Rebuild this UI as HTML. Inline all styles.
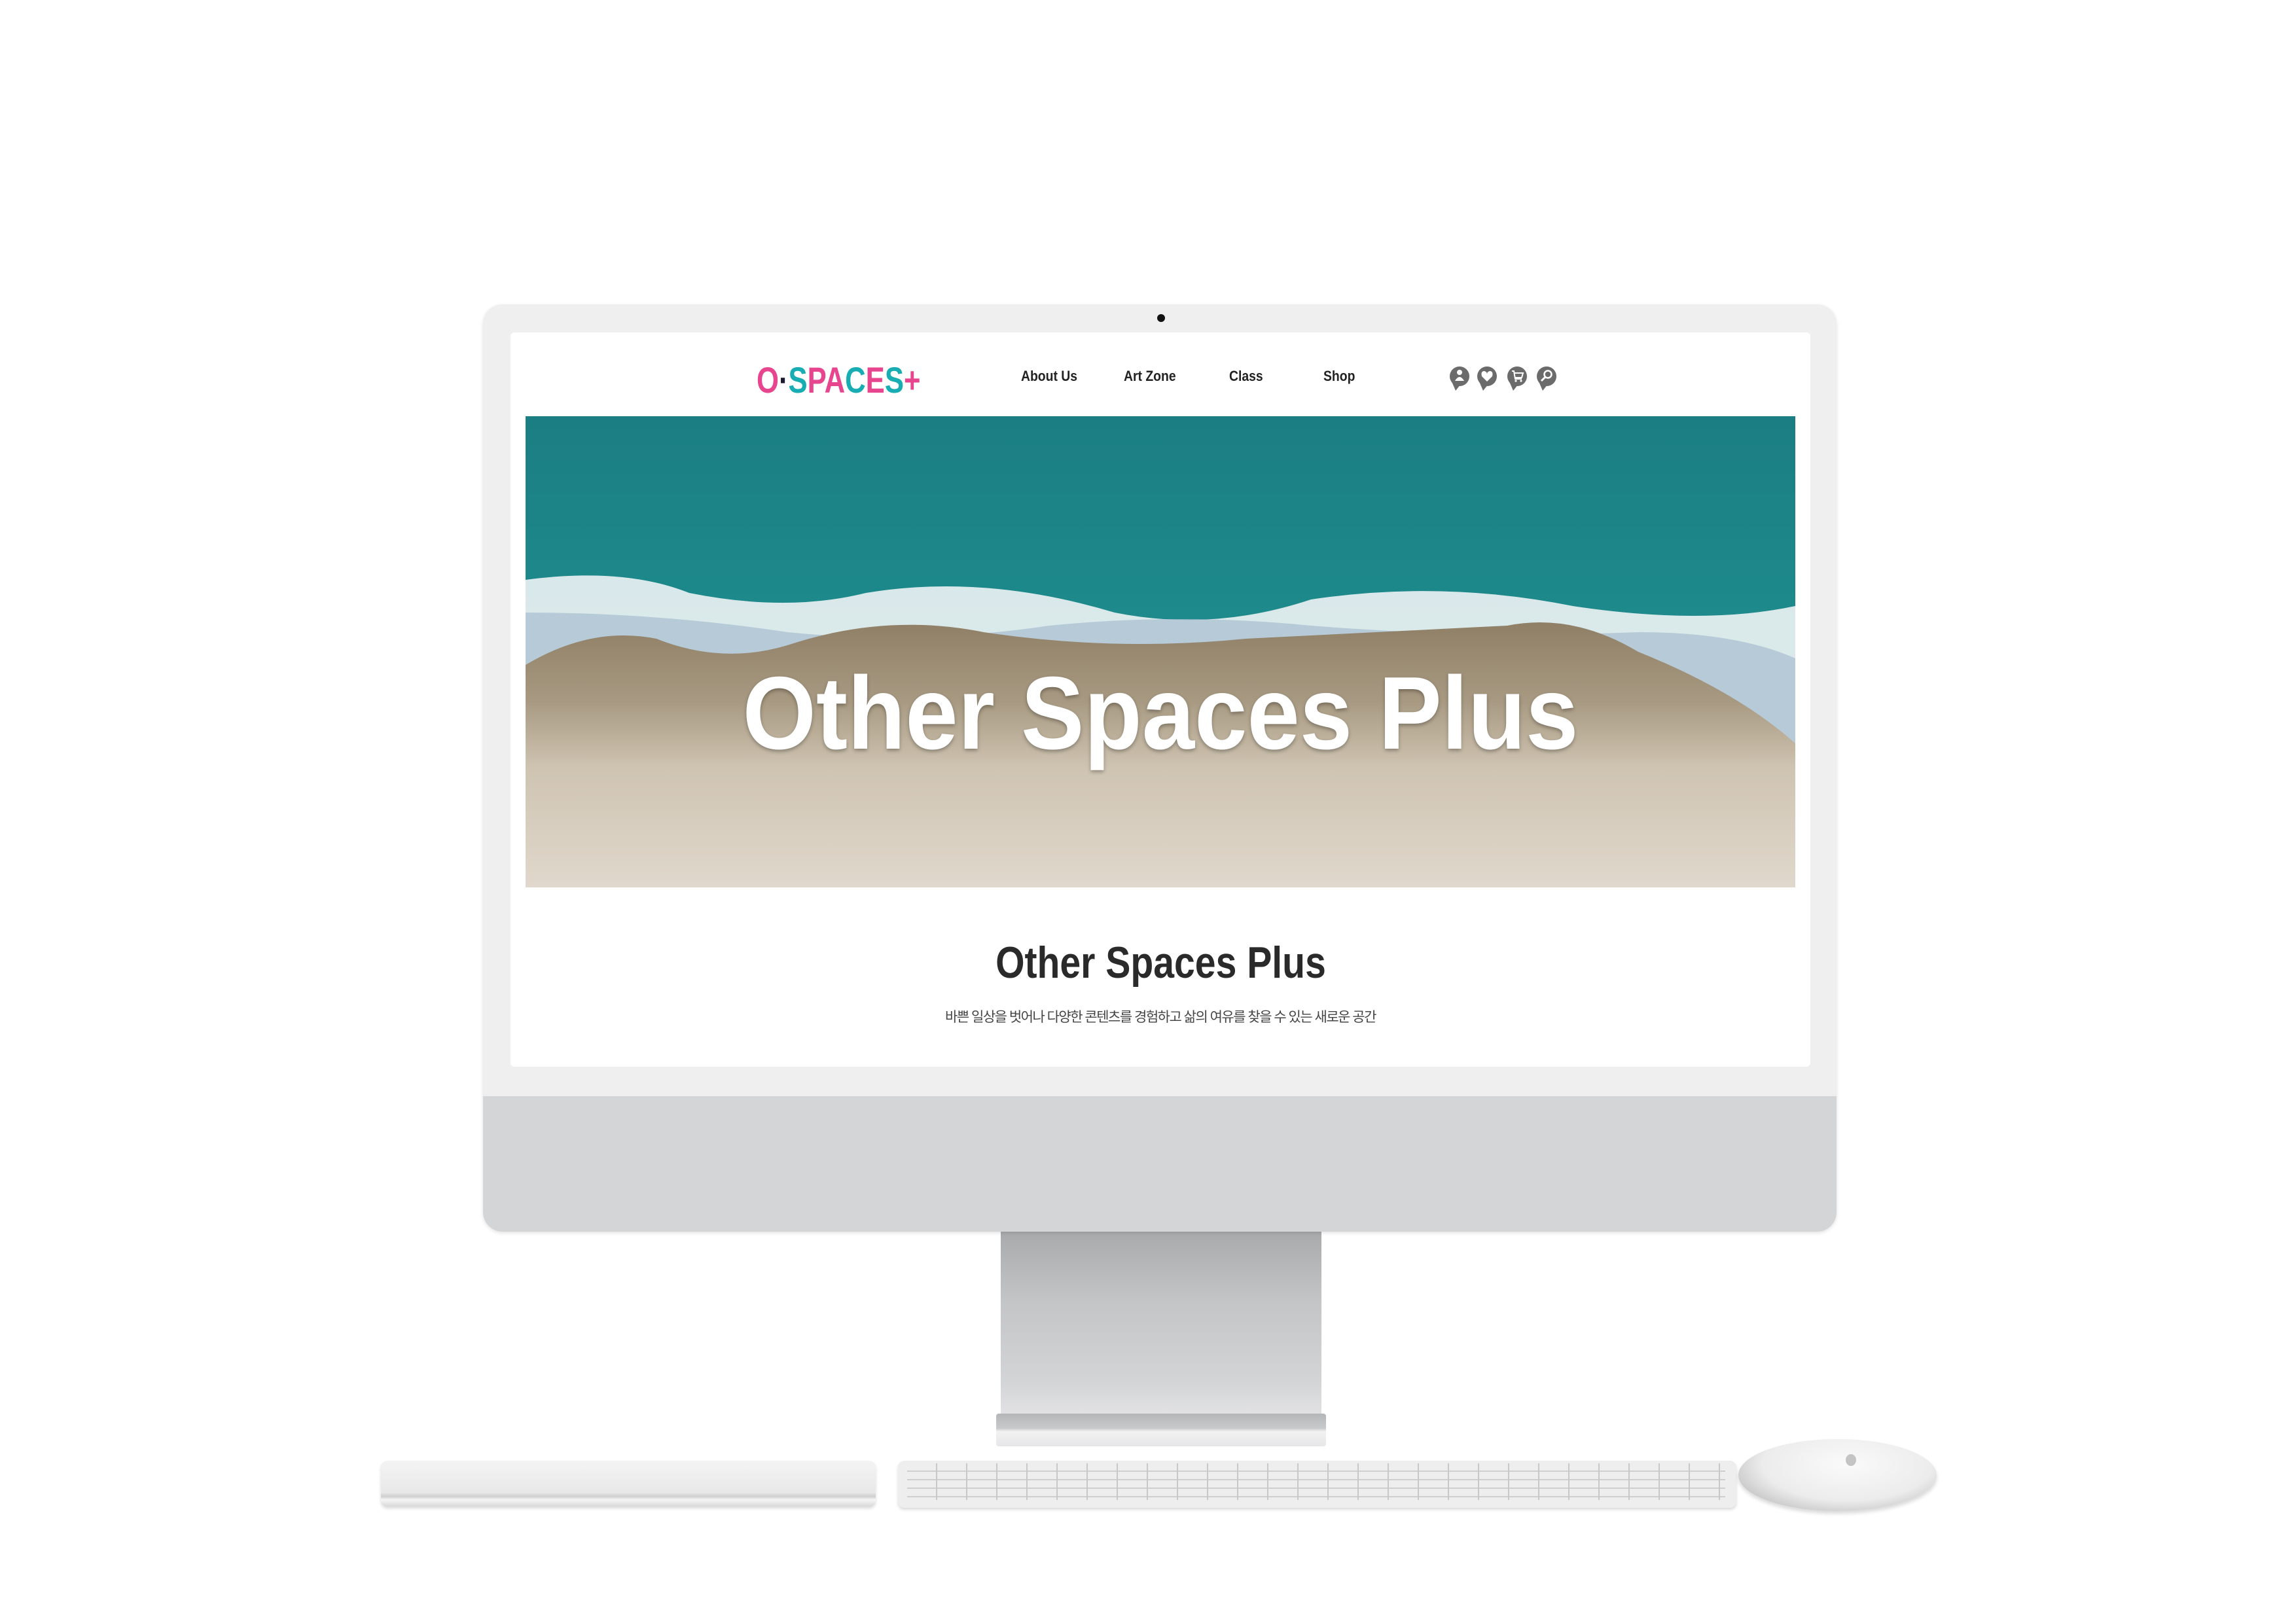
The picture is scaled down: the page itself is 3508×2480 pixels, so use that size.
<!DOCTYPE html>
<html><head><meta charset="utf-8"><style>
html,body{margin:0;padding:0;background:#fff;}
body{width:3508px;height:2480px;position:relative;overflow:hidden;font-family:"Liberation Sans","Noto Sans CJK KR",sans-serif;}
.a{position:absolute;}
</style></head><body>
<!-- stand -->
<div class="a" style="left:1529px;top:1870px;width:490px;height:300px;background:linear-gradient(180deg,#a6a7a9 0%,#c4c5c7 40%,#d3d4d6 80%,#e4e4e6 100%);"></div>
<div class="a" style="left:1522px;top:2160px;width:504px;height:50px;border-radius:4px;background:linear-gradient(180deg,#b5b6b8 0%,#c8c9cb 45%,#f2f2f2 55%,#e6e6e8 100%);"></div>
<!-- iMac body -->
<div class="a" style="left:738px;top:465px;width:2068px;height:1417px;border-radius:30px;background:#efefef;box-shadow:0 2px 6px rgba(0,0,0,0.12);overflow:hidden;">
  <div class="a" style="left:0;top:1210px;width:2068px;height:207px;background:#d4d5d7;"></div>
</div>
<div class="a" style="left:1768px;top:480px;width:12px;height:12px;border-radius:50%;background:#111;"></div>
<!-- screen -->
<div class="a" style="left:780px;top:508px;width:1986px;height:1122px;background:#fff;border-radius:6px;overflow:hidden;">
  <div class="a" style="left:376px;top:40px;font-size:56px;font-weight:bold;letter-spacing:0px;transform:scaleX(0.78);transform-origin:left;white-space:nowrap;">
    <span style="color:#e8458f">O</span><span style="color:#1a1a30">·</span><span style="color:#17adb3">S</span><span style="color:#e8458f">P</span><span style="color:#e8458f">A</span><span style="color:#17adb3">C</span><span style="color:#e8458f">E</span><span style="color:#17adb3">S</span><span style="color:#e8458f">+</span>
  </div>
  <div class="a" style="top:54px;left:0;width:1986px;font-size:22px;color:#222;font-weight:bold;">
    <span class="a" style="left:780px;transform:scaleX(0.88);transform-origin:left">About Us</span>
    <span class="a" style="left:937px;transform:scaleX(0.88);transform-origin:left">Art Zone</span>
    <span class="a" style="left:1098px;transform:scaleX(0.88);transform-origin:left">Class</span>
    <span class="a" style="left:1242px;transform:scaleX(0.88);transform-origin:left">Shop</span>
  </div>
  <svg class="a" style="left:1430px;top:42px" width="180" height="60" viewBox="0 0 180 60">
    <g fill="#6b6b6b">
      <g transform="translate(20,25)"><circle r="15"/><path d="M-12 8 L-6 22 L2 12 Z"/></g>
      <g transform="translate(62,25)"><circle r="15"/><path d="M-12 8 L-6 22 L2 12 Z"/></g>
      <g transform="translate(108,25)"><circle r="15"/><path d="M-12 8 L-6 22 L2 12 Z"/></g>
      <g transform="translate(153,25)"><circle r="15"/><path d="M-12 8 L-6 22 L2 12 Z"/></g>
    </g>
    <g fill="#fff" stroke="#fff">
      <circle cx="20" cy="19" r="4" stroke="none"/><path d="M13 32 Q20 20 27 32 Z" stroke="none"/>
      <path d="M62 33 L54 25 Q52 17 58 17 Q62 18 62 22 Q62 18 66 17 Q72 17 70 25 Z" stroke="none"/>
      <path d="M100 17 L103 17 L105 29 L115 29 M104 20 L117 20 L115 27 L105 27" fill="none" stroke-width="2"/><circle cx="106" cy="32" r="1.6" stroke="none"/><circle cx="114" cy="32" r="1.6" stroke="none"/>
      <circle cx="155" cy="22" r="5.5" fill="none" stroke-width="2.5"/><path d="M151 26 L145 32" stroke-width="3"/>
    </g>
  </svg>
  <!-- hero -->
  <svg class="a" style="left:23px;top:128px" width="1940" height="720" viewBox="0 0 1940 720" preserveAspectRatio="none">
    <defs>
      <linearGradient id="sea" x1="0" y1="0" x2="0" y2="1">
        <stop offset="0" stop-color="#1b7e82"/><stop offset="0.5" stop-color="#1e8c8d"/><stop offset="1" stop-color="#2a9a9a"/>
      </linearGradient>
      <linearGradient id="sand" x1="0" y1="0" x2="0" y2="1">
        <stop offset="0" stop-color="#8f7f66"/><stop offset="0.3" stop-color="#a89a82"/><stop offset="0.55" stop-color="#cfc4b2"/><stop offset="1" stop-color="#e0d8cc"/>
      </linearGradient>
    </defs>
    <rect width="1940" height="720" fill="url(#sea)"/>
    <path d="M0 250 Q150 230 250 270 Q400 300 520 270 Q700 240 900 300 Q1050 330 1200 280 Q1400 250 1600 290 Q1800 320 1940 290 L1940 500 L0 500 Z" fill="#eef3f4" opacity="0.9"/>
    <path d="M0 300 Q200 300 400 330 Q600 350 800 320 Q1000 300 1200 320 Q1450 340 1700 330 Q1850 330 1940 370 L1940 500 L0 500 Z" fill="#a9bfd0" opacity="0.75"/>
    <path d="M0 380 Q100 320 200 340 Q300 380 400 350 Q550 300 700 330 Q900 360 1100 340 Q1300 330 1500 320 Q1600 300 1700 360 Q1850 420 1940 500 L1940 720 L0 720 Z" fill="url(#sand)"/>
    <text x="970" y="508" text-anchor="middle" font-family="Liberation Sans, sans-serif" font-weight="bold" font-size="158" fill="#fff" textLength="1277" lengthAdjust="spacingAndGlyphs" style="text-shadow:0 3px 6px rgba(0,0,0,0.3)">Other Spaces Plus</text>
  </svg>
  <div class="a" style="left:0;width:1986px;top:924px;text-align:center;font-size:68px;font-weight:bold;color:#2a2a2a;"><span style="display:inline-block;transform:scaleX(0.84)">Other Spaces Plus</span></div>
  <div class="a" style="left:0;width:1986px;top:1030px;text-align:center;font-size:21px;color:#444;letter-spacing:-1.5px;">바쁜 일상을 벗어나 다양한 콘텐츠를 경험하고 삶의 여유를 찾을 수 있는 새로운 공간</div>
</div>
<!-- trackpad -->
<div class="a" style="left:582px;top:2232px;width:756px;height:70px;border-radius:10px;background:linear-gradient(180deg,#f4f4f4 0%,#e8e8e8 70%,#cfcfcf 78%,#f6f6f6 85%,#d8d8d8 100%);box-shadow:0 3px 5px rgba(0,0,0,0.15);"></div>
<!-- keyboard -->
<div class="a" style="left:1372px;top:2232px;width:1281px;height:72px;border-radius:10px;box-shadow:0 3px 5px rgba(0,0,0,0.15);
background-image:repeating-linear-gradient(90deg,transparent 0 44px,#c8c8c8 44px 46px),repeating-linear-gradient(180deg,transparent 0 11px,#cfcfcf 11px 13px);background-size:1250px 56px;background-position:14px 4px;background-repeat:no-repeat;background-color:#eeeeee;"></div>
<!-- mouse -->
<div class="a" style="left:2656px;top:2199px;width:303px;height:110px;border-radius:50%;background:radial-gradient(ellipse at 55% 35%,#fafafa 0%,#ececec 55%,#bdbdbd 85%,#9a9a9a 100%);box-shadow:0 4px 6px rgba(0,0,0,0.15);"></div>
<div class="a" style="left:2820px;top:2222px;width:16px;height:18px;border-radius:50%;background:#c4c4c4;"></div>
</body></html>
